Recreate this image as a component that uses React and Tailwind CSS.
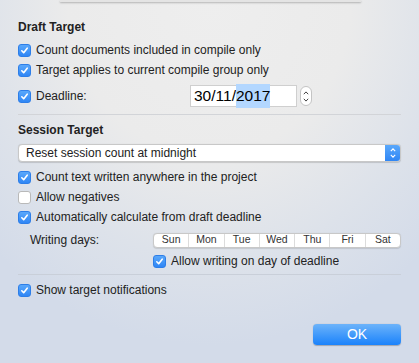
import { useState } from "react";

const Check = ({ checked, onChange }) => (
  <button
    type="button"
    onClick={onChange}
    className={
      "w-[13px] h-[13px] rounded-[3px] flex items-center justify-center shrink-0 " +
      (checked
        ? "bg-[linear-gradient(180deg,#5aa8fb,#2f86f5)] border border-[#2d7ee8]"
        : "bg-white border border-[#b9b9b9]")
    }
  >
    {checked && (
      <svg width="9" height="9" viewBox="0 0 10 10">
        <path d="M2 5.3 L4.1 7.4 L8 2.4" fill="none" stroke="white" strokeWidth="1.8" strokeLinecap="round" strokeLinejoin="round" />
      </svg>
    )}
  </button>
);

const Row = ({ label, checked, onChange, className = "" }) => (
  <div className={"flex items-center gap-[5px] h-[20px] " + className}>
    <Check checked={checked} onChange={onChange} />
    <span>{label}</span>
  </div>
);

const days = ["Sun", "Mon", "Tue", "Wed", "Thu", "Fri", "Sat"];

export default function App() {
  const [opts, setOpts] = useState({
    compileOnly: true,
    compileGroup: true,
    deadline: true,
    anywhere: true,
    negatives: false,
    auto: true,
    dayOf: true,
    notify: true,
  });
  const toggle = (k) => () => setOpts((o) => ({ ...o, [k]: !o[k] }));

  return (
    <div
      className="relative w-[419px] h-[363px] overflow-hidden text-[12px] text-[#222] bg-[radial-gradient(ellipse_75%_95%_at_50%_0%,#eeeeee_0%,#ebebeb_45%,#dde2ea_75%,#d3dbe9_100%)]"
      style={{ fontFamily: "'Liberation Sans', Arial, sans-serif" }}
    >
      <div className="absolute top-0 left-[60px] w-[301px] h-[2px] bg-[#e4e4e4] shadow-[0_1px_2px_rgba(0,0,0,0.25)]" />

      <div className="px-[18px] pt-[19px]">
        <div className="font-bold h-[16px] leading-[16px]">Draft Target</div>
        <div className="mt-[5px]">
          <Row label="Count documents included in compile only" checked={opts.compileOnly} onChange={toggle("compileOnly")} />
          <Row label="Target applies to current compile group only" checked={opts.compileGroup} onChange={toggle("compileGroup")} />
          <div className="flex items-center h-[26px] mt-[3px]">
            <Row label="Deadline:" checked={opts.deadline} onChange={toggle("deadline")} className="w-[172px]" />
            <div className="w-[107px] h-[22px] bg-white border border-[#cfcfcf] flex items-center pl-[3px] text-[15.5px] text-black">
              30/11/<span className="bg-[#b3d7ff]">2017</span>
            </div>
            <div className="ml-[3px] w-[12px] h-[20px] rounded-[6px] bg-white border border-[#c4c4c4] flex flex-col items-center justify-center gap-[3px]">
              <svg width="6" height="4" viewBox="0 0 6 4"><path d="M0.8 3.2 L3 0.9 L5.2 3.2" fill="none" stroke="#444" strokeWidth="1" /></svg>
              <svg width="6" height="4" viewBox="0 0 6 4"><path d="M0.8 0.8 L3 3.1 L5.2 0.8" fill="none" stroke="#444" strokeWidth="1" /></svg>
            </div>
          </div>
        </div>

        <div className="h-px bg-[#d2d4d8] mt-[5px]" />

        <div className="font-bold h-[18px] leading-[18px] mt-[6px]">Session Target</div>
        <div className="mt-[5px] h-[18px] rounded-[4px] bg-white border border-[#c8c8c8] flex items-center shadow-[0_0.5px_1px_rgba(0,0,0,0.15)] overflow-hidden">
          <span className="flex-1 pl-[7px]">Reset session count at midnight</span>
          <div className="w-[15px] h-full bg-[linear-gradient(180deg,#5aa8fb,#2f86f5)] flex flex-col items-center justify-center gap-[2px]">
            <svg width="6" height="4" viewBox="0 0 6 4"><path d="M0.8 3.2 L3 0.9 L5.2 3.2" fill="none" stroke="white" strokeWidth="1.1" /></svg>
            <svg width="6" height="4" viewBox="0 0 6 4"><path d="M0.8 0.8 L3 3.1 L5.2 0.8" fill="none" stroke="white" strokeWidth="1.1" /></svg>
          </div>
        </div>
        <div className="mt-[5px]">
          <Row label="Count text written anywhere in the project" checked={opts.anywhere} onChange={toggle("anywhere")} />
          <Row label="Allow negatives" checked={opts.negatives} onChange={toggle("negatives")} />
          <Row label="Automatically calculate from draft deadline" checked={opts.auto} onChange={toggle("auto")} />
        </div>
        <div className="flex items-center mt-[5px] h-[16px]">
          <span className="w-[135px] pl-[12px]">Writing days:</span>
          <div className="flex-1 h-[15px] bg-white border border-[#c8c8c8] rounded-[4px] flex text-[10.5px] text-[#333] shadow-[0_0.5px_1px_rgba(0,0,0,0.12)]">
            {days.map((d, i) => (
              <div
                key={d}
                className={"flex-1 flex items-center justify-center " + (i < days.length - 1 ? "border-r border-[#dcdcdc]" : "")}
              >
                {d}
              </div>
            ))}
          </div>
        </div>
        <Row
          label="Allow writing on day of deadline"
          checked={opts.dayOf}
          onChange={toggle("dayOf")}
          className="ml-[135px] mt-[3px]"
        />

        <div className="h-px bg-[#c9cfd9] mt-[3px]" />

        <Row label="Show target notifications" checked={opts.notify} onChange={toggle("notify")} className="mt-[5px]" />

        <div className="flex justify-end mt-[24px]">
          <button className="w-[88px] h-[21px] rounded-[4px] bg-[linear-gradient(180deg,#6cb3fa,#1a82fb)] text-white text-[14px] shadow-[0_0.5px_1px_rgba(0,0,0,0.25)]">
            OK
          </button>
        </div>
      </div>
    </div>
  );
}
